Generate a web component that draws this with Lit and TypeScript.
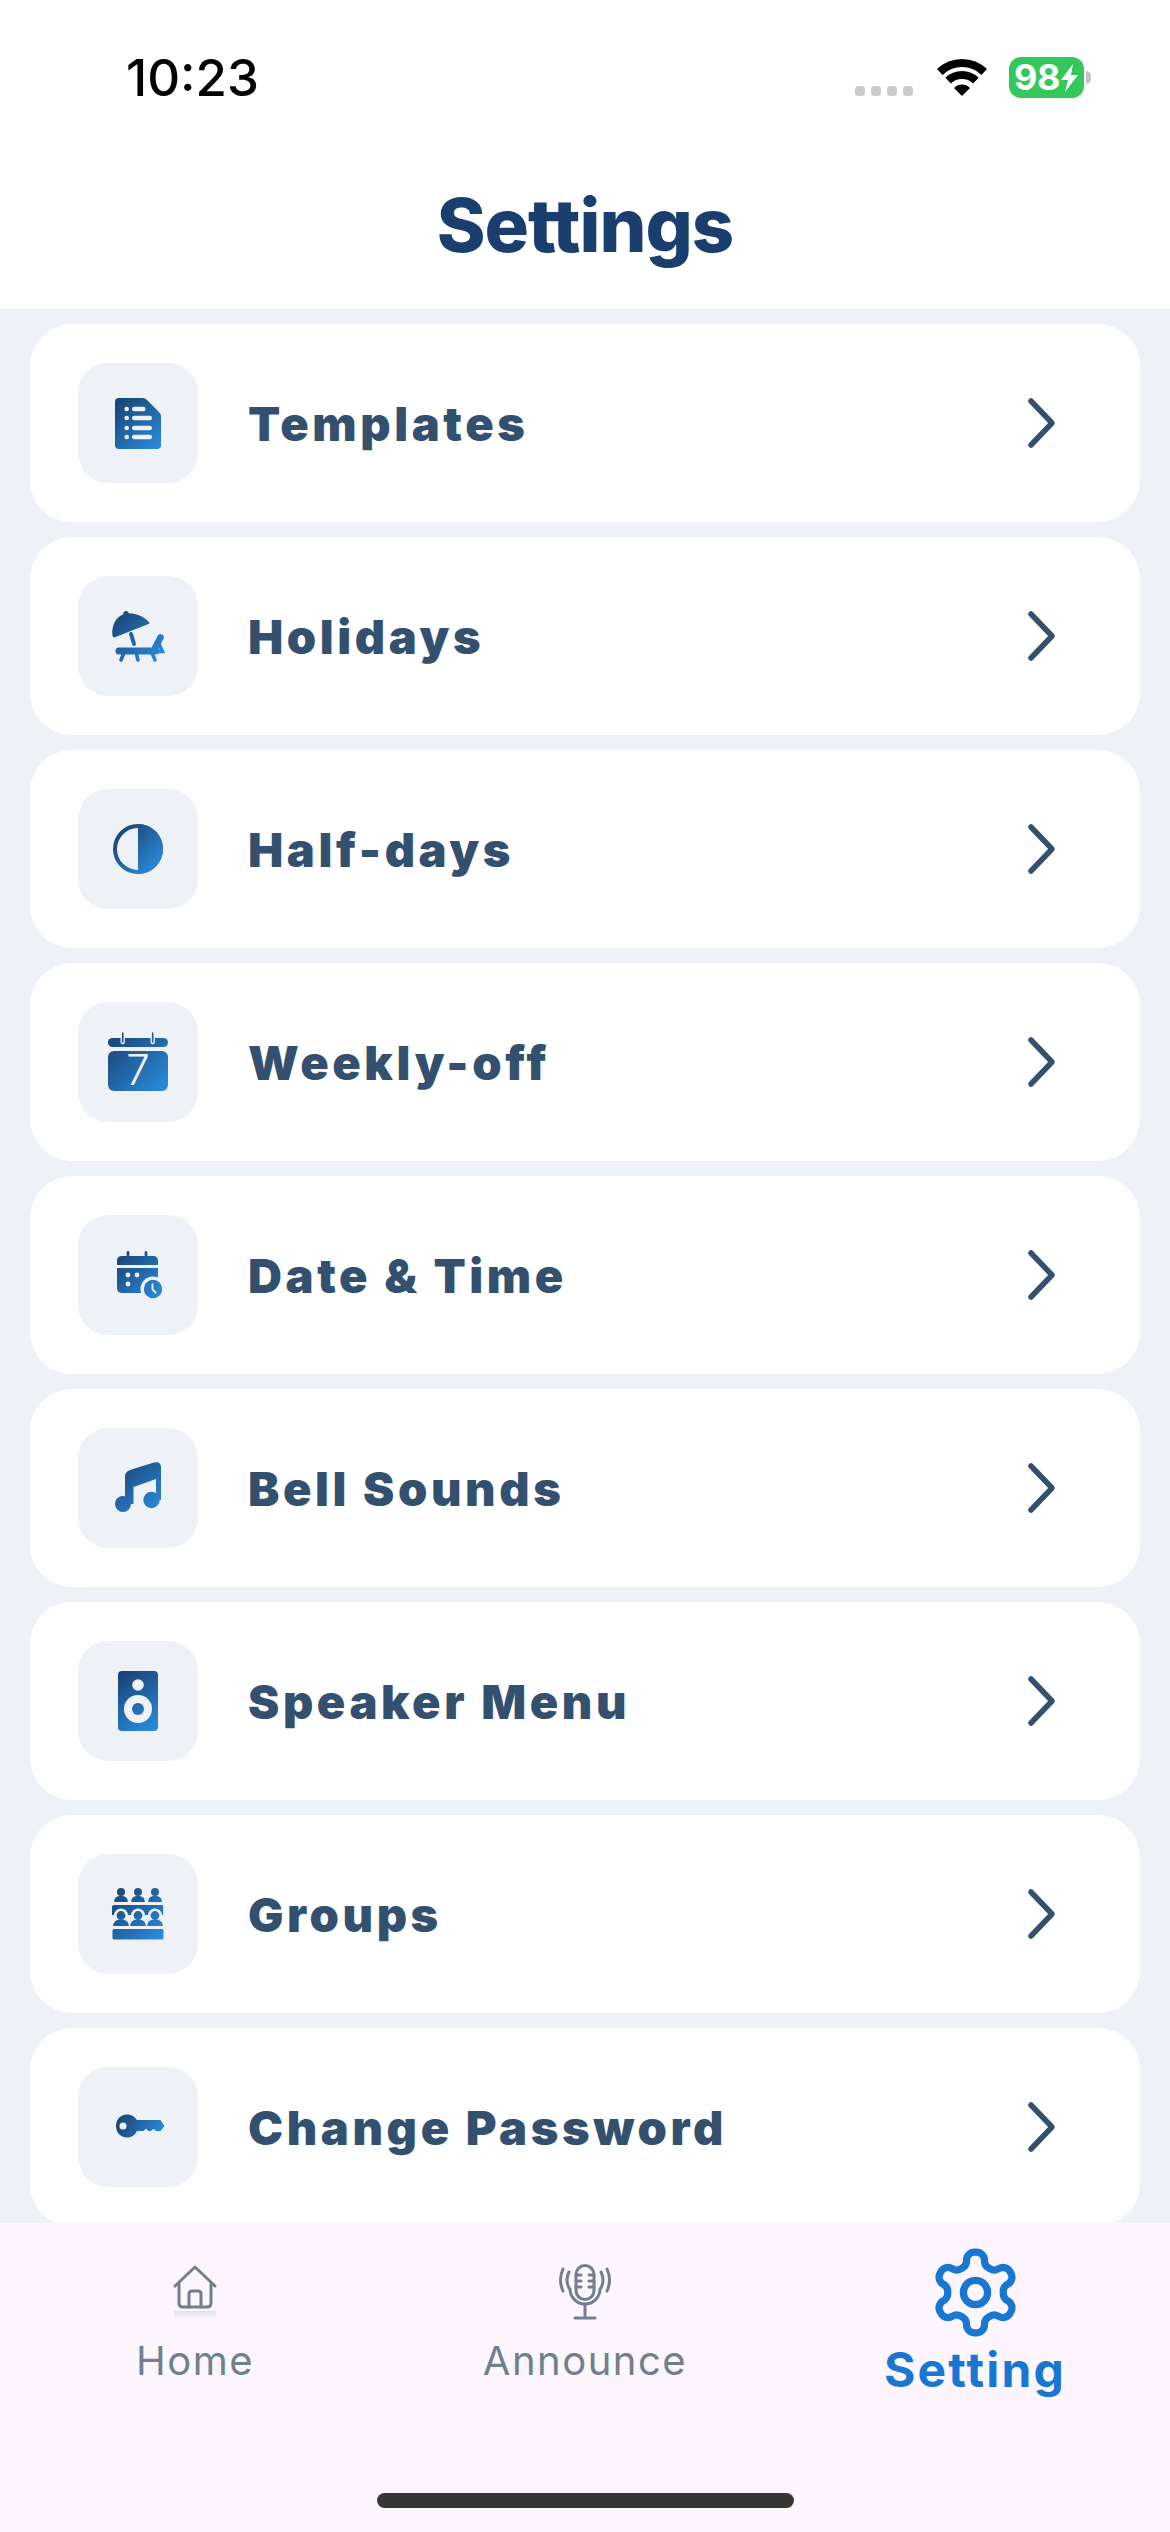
import { LitElement, html, css, svg } from 'lit';
import { customElement } from 'lit/decorators.js';

// icons are drawn in the 120x120 coordinates of the tile
const tileIcon = (id: string, box: number[], body: unknown) => html`
  <svg class="glyph" viewBox="0 0 120 120">
    <defs>
      <linearGradient id=${id} gradientUnits="userSpaceOnUse"
        x1=${box[0]} y1=${box[1]} x2=${box[2]} y2=${box[3]}>
        <stop offset="0" stop-color="#1a3f6f"></stop>
        <stop offset="1" stop-color="#2a8fe0"></stop>
      </linearGradient>
    </defs>
    <g fill="url(#${id})" stroke="none">${body}</g>
  </svg>
`;

const TILE = '#eef2f7';

const templatesIcon = tileIcon('g-doc', [37, 35, 83, 86], svg`
  <path d="M41 35H65Q67 35 69 37L81 49Q83 51 83 53V82Q83 86 79 86H41Q37 86 37 82V39Q37 35 41 35Z"/>
  ${[46, 55, 65, 74].map((y, i) => svg`
    <circle cx="48.7" cy=${y} r="2.3" fill=${TILE}/>
    <rect x="54" y=${y - 2.2} width=${i === 0 ? 13.5 : 20} height="4.4" rx="2.2" fill=${TILE}/>
  `)}
`);

const holidaysIcon = tileIcon('g-beach', [34, 35, 86, 85], svg`
  <circle cx="48" cy="37.5" r="2.6"/>
  <path d="M34.5 59.5C33 47 41 37 51 37.2C60 37.4 68 42 71.2 46.5C71.6 47.2 71.3 47.8 70.6 48L37 61.2C35.6 61.6 34.7 61 34.5 59.5Z"/>
  <g fill="none" stroke="url(#g-beach)" stroke-linecap="round">
    <path d="M53 58L56 68" stroke-width="4"/>
    <path d="M41 75H78" stroke-width="7"/>
    <path d="M77 72L82.5 61.5" stroke-width="6.5"/>
    <path d="M81 68L84.5 75.5H77" stroke-width="3.5"/>
    <path d="M45.5 78L43 84M58.5 78L60 84M74.5 78L77 84" stroke-width="3.6"/>
  </g>
`);

const halfDaysIcon = tileIcon('g-half', [38, 38, 82, 82], svg`
  <circle cx="60" cy="60" r="23" fill="none" stroke="url(#g-half)" stroke-width="4"/>
  <path d="M60 35A25 25 0 0 1 60 85Z"/>
`);

const weeklyIcon = tileIcon('g-week', [30, 30, 90, 90], svg`
  <rect x="30" y="36" width="60" height="9" rx="4.5"/>
  <rect x="43.2" y="29.5" width="3" height="12" rx="1.5" stroke=${TILE} stroke-width="1.4"/>
  <rect x="73.2" y="29.5" width="3" height="12" rx="1.5" stroke=${TILE} stroke-width="1.4"/>
  <rect x="30" y="49" width="60" height="40" rx="6"/>
  <text x="60" y="83" text-anchor="middle" fill=${TILE} font-family="Inter, sans-serif" font-size="42" font-weight="300">7</text>
`);

const dateTimeIcon = tileIcon('g-date', [39, 36, 84, 83], svg`
  <rect x="48.6" y="36" width="2.8" height="8" rx="1.4"/>
  <rect x="66.6" y="36" width="2.8" height="8" rx="1.4"/>
  <path d="M39 50V46Q39 41 44 41H75Q80 41 80 46V50Z"/>
  <path d="M39 53H80V78H44Q39 78 39 73Z"/>
  <circle cx="50" cy="60" r="2.4" fill=${TILE}/>
  <circle cx="59" cy="60" r="2.4" fill=${TILE}/>
  <circle cx="50" cy="69" r="2.4" fill=${TILE}/>
  <circle cx="75" cy="74" r="12.5" fill=${TILE}/>
  <circle cx="75" cy="74" r="9.2"/>
  <path d="M74.5 69V74.5L77.5 77.5" fill="none" stroke=${TILE} stroke-width="1.8" stroke-linecap="round"/>
`);

const musicIcon = tileIcon('g-music', [37, 33, 83, 84], svg`
  <circle cx="45" cy="76" r="8"/>
  <circle cx="73.5" cy="72" r="8.2"/>
  <path d="M47 76V48Q47 43 55 41L76 34.5Q83 33 83 39.5V72H78V51L55.5 59V76Z"/>
`);

const speakerIcon = tileIcon('g-speaker', [40, 30, 80, 90], svg`
  <rect x="40" y="30" width="40" height="60" rx="4"/>
  <circle cx="60" cy="44" r="5.8" fill=${TILE}/>
  <circle cx="60" cy="68" r="14" fill=${TILE}/>
  <circle cx="60" cy="68" r="6"/>
`);

const groupsIcon = tileIcon('g-groups', [34, 34, 86, 85], svg`
  ${[43, 60, 77].map((x) => svg`
    <circle cx=${x} cy="38" r="4"/>
    <path d="M${x - 6.8} 48.5C${x - 6.8} 44 ${x - 4} 42.5 ${x} 42.5C${x + 4} 42.5 ${x + 6.8} 44 ${x + 6.8} 48.5Z" transform="translate(0 -0.5)"/>
  `)}
  <path d="M36 51H84Q85.2 51 85.2 52.5V61H34V52.5Q34 51 36 51Z"/>
  ${[43, 60, 77].map((x) => svg`
    <circle cx=${x} cy="61.5" r="7" fill=${TILE}/>
    <circle cx=${x} cy="61.5" r="4.4"/>
    <path d="M${x - 7.8} 72C${x - 7.8} 67 ${x - 4} 65.5 ${x} 65.5C${x + 4} 65.5 ${x + 7.8} 67 ${x + 7.8} 72Z"/>
  `)}
  <rect x="34.5" y="75" width="51" height="10.5" rx="1.6"/>
`);

const keyIcon = tileIcon('g-key', [38, 47, 86, 71], svg`
  <path fill-rule="evenodd" d="M49 47.5C54 47.5 57 50 59 53H82.5L86.5 59L82.5 64H78L75.5 61.8L73 64H70.5L68 61.8L65.5 64H59C57 68 54 70.5 49 70.5C42.5 70.5 38 65.5 38 59C38 52.5 42.5 47.5 49 47.5ZM45 55.5A3.5 3.5 0 1 0 45 62.5A3.5 3.5 0 1 0 45 55.5Z"/>
`);

const ROWS = [
  { label: 'Templates', icon: templatesIcon },
  { label: 'Holidays', icon: holidaysIcon },
  { label: 'Half-days', icon: halfDaysIcon },
  { label: 'Weekly-off', icon: weeklyIcon },
  { label: 'Date & Time', icon: dateTimeIcon },
  { label: 'Bell Sounds', icon: musicIcon },
  { label: 'Speaker Menu', icon: speakerIcon },
  { label: 'Groups', icon: groupsIcon },
  { label: 'Change Password', icon: keyIcon },
];

@customElement('app-root')
export class AppRoot extends LitElement {
  static styles = css`
    :host {
      display: block;
      width: 1170px;
      height: 2532px;
      font-family: Inter, "Liberation Sans", sans-serif;
      background: #eef2f7;
    }
    .page {
      display: flex;
      flex-direction: column;
      height: 2532px;
      overflow: hidden;
    }
    .header {
      height: 309px;
      flex: none;
      background: #fff;
      box-sizing: border-box;
      padding-top: 57px;
    }
    .status {
      display: flex;
      align-items: center;
      justify-content: space-between;
      height: 41px;
      padding: 0 79px 0 126px;
    }
    .time {
      font-size: 51px;
      font-weight: 500;
      line-height: 41px;
      color: #000;
    }
    .status-icons {
      display: flex;
      align-items: flex-start;
    }
    .dots {
      display: flex;
      gap: 6px;
      margin-top: 29px;
      margin-right: 24px;
    }
    .dots i {
      width: 10px;
      height: 10px;
      border-radius: 3.5px;
      background: #cbcbcb;
    }
    .wifi {
      width: 50px;
      height: 38px;
      margin-top: 2px;
      margin-right: 22px;
    }
    .battery {
      width: 75px;
      height: 41px;
      border-radius: 12px;
      background: #34c759;
      color: #fff;
      display: flex;
      align-items: center;
      justify-content: center;
      font-size: 36px;
      font-weight: 700;
      letter-spacing: -0.5px;
      line-height: 41px;
    }
    .battery svg {
      width: 19px;
      height: 32px;
    }
    .nub {
      width: 5px;
      height: 13px;
      margin: 14px 0 0 2px;
      border-radius: 0 6px 6px 0;
      background: #c4c4c4;
    }
    .title {
      margin: 84px 0 0;
      text-align: center;
      font-size: 74px;
      font-weight: 800;
      letter-spacing: -1px;
      line-height: 86px;
      color: #1a3f6f;
    }
    .list {
      flex: 1;
      min-height: 0;
      overflow: hidden;
      display: flex;
      flex-direction: column;
      gap: 15px;
      padding: 15px 30px 0;
    }
    .row {
      flex: none;
      height: 198px;
      box-sizing: border-box;
      padding: 0 60px 0 48px;
      display: flex;
      align-items: center;
      background: #fff;
      border-radius: 42px;
    }
    .tile {
      flex: none;
      width: 120px;
      height: 120px;
      border-radius: 30px;
      background: #eef2f7;
    }
    .glyph {
      display: block;
      width: 120px;
      height: 120px;
    }
    .label {
      flex: 1;
      margin-left: 50px;
      font-size: 47px;
      font-weight: 900;
      letter-spacing: 3.6px;
      color: #34506f;
    }
    .chevron {
      flex: none;
      width: 40px;
      height: 56px;
      margin-right: 18px;
    }
    .tabs {
      flex: none;
      height: 309px;
      background: #fdf6fe;
      display: flex;
      flex-direction: column;
    }
    .tab-row {
      display: flex;
      height: 270px;
    }
    .tab {
      flex: 1;
      display: flex;
      flex-direction: column;
      align-items: center;
      color: #708090;
      font-size: 40px;
      letter-spacing: 1.5px;
      line-height: 48px;
    }
    .tab svg {
      display: block;
    }
    .home-icon {
      width: 44px;
      height: 44px;
      margin-top: 42px;
    }
    .home-shadow {
      width: 42px;
      height: 9px;
      margin-top: 2px;
      margin-bottom: 17px;
      background: linear-gradient(rgba(112, 128, 144, 0.2), rgba(112, 128, 144, 0));
    }
    .mic-icon {
      width: 60px;
      height: 56px;
      margin-top: 41px;
      margin-bottom: 17px;
    }
    .tab.active {
      color: #1976d2;
      font-size: 48px;
      font-weight: 700;
      letter-spacing: 2.2px;
      line-height: 58px;
    }
    .gear-icon {
      width: 97px;
      height: 97px;
      margin-top: 21px;
    }
    .indicator {
      width: 417px;
      height: 15px;
      margin: 0 auto;
      border-radius: 8px;
      background: #363636;
    }
  `;

  render() {
    return html`
      <div class="page">
        <div class="header">
          <div class="status">
            <span class="time">10:23</span>
            <div class="status-icons">
              <div class="dots"><i></i><i></i><i></i><i></i></div>
              <svg class="wifi" viewBox="0 0 50 38">
                <g fill="none" stroke="#000" stroke-width="8">
                  <path d="M2.8 13A32 32 0 0 1 47.2 13"/>
                  <path d="M11.1 21.6A20 20 0 0 1 38.9 21.6"/>
                </g>
                <path d="M25 37L17 29A11 11 0 0 1 33 29Z" fill="#000"/>
              </svg>
              <div class="battery">
                98<svg viewBox="0 0 19 28"><path d="M13 0L1 16H8L5 28L18 11H11Z" fill="#fff"/></svg>
              </div>
              <div class="nub"></div>
            </div>
          </div>
          <h1 class="title">Settings</h1>
        </div>
        <div class="list">
          ${ROWS.map((r) => html`
            <div class="row">
              <div class="tile">${r.icon}</div>
              <span class="label">${r.label}</span>
              <svg class="chevron" viewBox="0 0 40 56" fill="none" stroke="#34506f" stroke-width="5.5" stroke-linecap="round" stroke-linejoin="round">
                <path d="M9 6L30 28L9 50"/>
              </svg>
            </div>
          `)}
        </div>
        <div class="tabs">
          <div class="tab-row">
            <div class="tab">
              <svg class="home-icon" viewBox="0 0 44 44" fill="none" stroke="#708090" stroke-width="3" stroke-linejoin="round" stroke-linecap="round">
                <path d="M2 21L22 2L42 21"/>
                <path d="M6 19V38Q6 42 10 42H34Q38 42 38 38V19"/>
                <path d="M16 42V29Q16 26 19 26H25Q28 26 28 29V42"/>
              </svg>
              <div class="home-shadow"></div>
              <span>Home</span>
            </div>
            <div class="tab">
              <svg class="mic-icon" viewBox="0 0 60 56" fill="none" stroke="#708090" stroke-width="3" stroke-linecap="round">
                <rect x="21" y="1.5" width="18" height="34" rx="9"/>
                <path d="M21 11H26M21 17H26M21 23H26M39 11H34M39 17H34M39 23H34"/>
                <path d="M15 25A15 15 0 0 0 45 25"/>
                <path d="M30 40V53M20 54H40"/>
                <path d="M14 8Q10 16 14 24M8 5Q3 16 8 27M46 8Q50 16 46 24M52 5Q57 16 52 27"/>
              </svg>
              <span>Announce</span>
            </div>
            <div class="tab active">
              <svg class="gear-icon" viewBox="0 0 24 24" fill="none" stroke="#1976d2" stroke-width="1.8" stroke-linecap="round" stroke-linejoin="round">
                <path d="M12.22 2h-.44a2 2 0 0 0-2 2v.18a2 2 0 0 1-1 1.73l-.43.25a2 2 0 0 1-2 0l-.15-.08a2 2 0 0 0-2.73.73l-.22.38a2 2 0 0 0 .73 2.73l.15.1a2 2 0 0 1 1 1.72v.51a2 2 0 0 1-1 1.74l-.15.09a2 2 0 0 0-.73 2.73l.22.38a2 2 0 0 0 2.73.73l.15-.08a2 2 0 0 1 2 0l.43.25a2 2 0 0 1 1 1.73V20a2 2 0 0 0 2 2h.44a2 2 0 0 0 2-2v-.18a2 2 0 0 1 1-1.73l.43-.25a2 2 0 0 1 2 0l.15.08a2 2 0 0 0 2.73-.73l.22-.39a2 2 0 0 0-.73-2.73l-.15-.08a2 2 0 0 1-1-1.74v-.5a2 2 0 0 1 1-1.74l.15-.09a2 2 0 0 0 .73-2.73l-.22-.38a2 2 0 0 0-2.73-.73l-.15.08a2 2 0 0 1-2 0l-.43-.25a2 2 0 0 1-1-1.73V4a2 2 0 0 0-2-2z"/>
                <circle cx="12" cy="12" r="3"/>
              </svg>
              <span>Setting</span>
            </div>
          </div>
          <div class="indicator"></div>
        </div>
      </div>
    `;
  }
}
